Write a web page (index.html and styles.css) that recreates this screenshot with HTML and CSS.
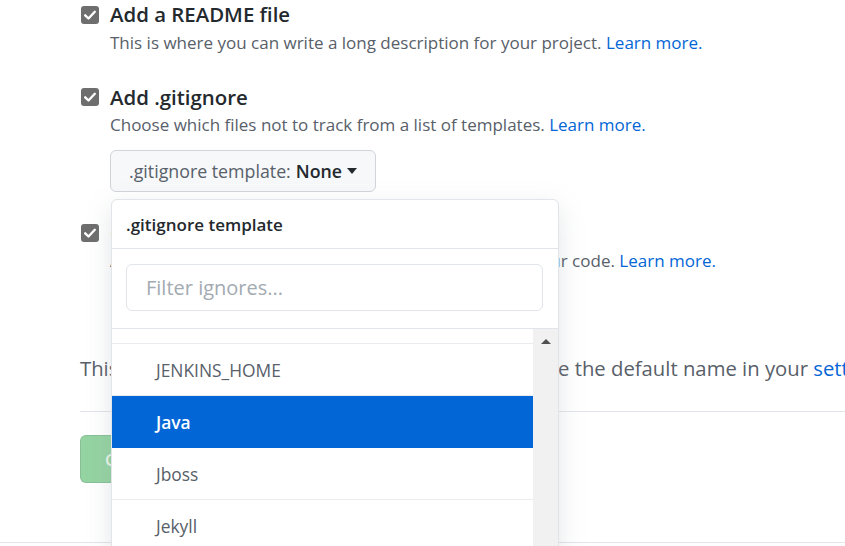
FILE: index.html
```html
<!DOCTYPE html>
<html>
<head>
<meta charset="utf-8">
<link rel="stylesheet" href="styles.css">
</head>
<body>
<div class="page">
  <div class="option first">
    <span class="check"><svg width="18" height="18" viewBox="0 0 18 18"><rect width="18" height="18" rx="3" fill="#6e6e6e"/><path d="M4.2 9.3 L7.5 12.5 L13.8 5.8" stroke="#fff" stroke-width="2.4" fill="none" stroke-linecap="round" stroke-linejoin="round"/></svg></span>
    <div class="body">
      <div class="title">Add a README file</div>
      <div class="desc">This is where you can write a long description for your project. <a>Learn more.</a></div>
    </div>
  </div>
  <div class="option second">
    <span class="check"><svg width="18" height="18" viewBox="0 0 18 18"><rect width="18" height="18" rx="3" fill="#6e6e6e"/><path d="M4.2 9.3 L7.5 12.5 L13.8 5.8" stroke="#fff" stroke-width="2.4" fill="none" stroke-linecap="round" stroke-linejoin="round"/></svg></span>
    <div class="body">
      <div class="title">Add .gitignore</div>
      <div class="desc">Choose which files not to track from a list of templates. <a>Learn more.</a></div>
      <button class="select-btn"><span class="muted">.gitignore template:</span> <b>None</b> <span class="caret"></span></button>
    </div>
  </div>
  <div class="option third">
    <span class="check"><svg width="18" height="18" viewBox="0 0 18 18"><rect width="18" height="18" rx="3" fill="#6e6e6e"/><path d="M4.2 9.3 L7.5 12.5 L13.8 5.8" stroke="#fff" stroke-width="2.4" fill="none" stroke-linecap="round" stroke-linejoin="round"/></svg></span>
    <div class="body">
      <div class="title">Choose a license</div>
      <div class="desc">A license tells others what they can and can't do with your code. <a>Learn more.</a></div>
    </div>
  </div>
  <p class="branch-note">This will set <span class="branch">main</span> as the default branch. Change the default name in your <a>settings</a>.</p>
  <hr class="rule">
  <button class="create">Create repository</button>
  <div class="footer-line"></div>
</div>

<div class="menu">
  <div class="menu-header">.gitignore template</div>
  <div class="menu-filter"><input class="filter-input" type="text" placeholder="Filter ignores..."></div>
  <div class="menu-list-wrap">
    <div class="menu-list">
      <div class="item partial"></div>
      <div class="item">JENKINS_HOME</div>
      <div class="item selected">Java</div>
      <div class="item">Jboss</div>
      <div class="item">Jekyll</div>
    </div>
    <div class="scrollbar"><span class="arrow-up"></span></div>
  </div>
</div>
</body>
</html>
```
FILE: styles.css
```css
html, body {
  margin: 0;
  padding: 0;
  background: #fff;
  overflow: hidden;
  height: 546px;
}
body {
  font-family: "Open Sans", "Noto Sans", sans-serif;
  color: #24292e;
}
.page {
  padding-left: 80px;
  position: relative;
}
.option {
  display: flex;
  align-items: flex-start;
  gap: 11px;
}
.check {
  display: block;
  margin-left: 1px;
  margin-top: 5px;
  height: 18px;
}
.option.first { padding-top: 0; }
.option.first .check { margin-top: 6px; }
.option.second { margin-top: 26px; }
.option.third { margin-top: 27px; }
.title {
  font-size: 20.4px;
  font-weight: 600;
  line-height: 28px;
}
.option.first .desc { margin-top: 1px; }
.desc {
  font-size: 17px;
  line-height: 28px;
  color: #586069;
}
a { color: #0366d6; }
.select-btn {
  margin-top: 11px;
  height: 42px;
  padding: 0 18px;
  font-family: inherit;
  font-size: 17.8px;
  background: #f6f8fa;
  border: 1px solid #d1d5da;
  border-radius: 6px;
  color: #24292e;
  display: flex;
  align-items: center;
  gap: 5px;
}
.select-btn b { font-weight: 600; }
.muted { color: #586069; }
.caret {
  width: 0; height: 0;
  border-left: 5.5px solid transparent;
  border-right: 5.5px solid transparent;
  border-top: 6px solid #24292e;
}
.branch-note {
  margin: 79px 0 0;
  height: 29px;
  font-size: 20.3px;
  line-height: 28px;
  color: #586069;
  white-space: nowrap;
}
.branch {
  color: #0366d6;
  background: #f1f8ff;
  font-family: "Liberation Mono", monospace;
  font-size: 19px;
  line-height: 20px;
  padding: 3px 8px;
  margin: 0 13px;
  border-radius: 6px;
}
.rule {
  margin: 28px 0 0;
  border: 0;
  border-top: 1px solid #e1e4e8;
}
.create {
  margin-top: 23px;
  height: 48px;
  padding: 0 24px;
  background: #94d3a2;
  border: 1px solid rgba(27,31,35,0.1);
  border-radius: 6px;
  color: rgba(255,255,255,0.8);
  font-family: inherit;
  font-size: 17px;
  font-weight: 600;
}
.footer-line {
  margin-top: 59px;
  margin-left: -80px;
  border-top: 1px solid #e1e4e8;
}

.menu {
  position: absolute;
  left: 111px;
  top: 199px;
  width: 446px;
  height: 420px;
  background: #fff;
  border: 1px solid #e1e4e8;
  border-radius: 6px;
  box-shadow: 0 8px 24px rgba(149,157,165,0.25);
  overflow: hidden;
}
.menu-header {
  height: 48px;
  padding-left: 14px;
  display: flex;
  align-items: center;
  font-size: 17px;
  font-weight: 600;
  border-bottom: 1px solid #e1e4e8;
}
.menu-filter {
  padding: 15px 15px 17px 14px;
  border-bottom: 1px solid #e1e4e8;
}
.filter-input {
  display: block;
  box-sizing: border-box;
  width: 100%;
  height: 47px;
  border: 1px solid #e1e4e8;
  border-radius: 6px;
  padding: 0 19px;
  font-family: inherit;
  font-size: 20px;
  outline: none;
}
.filter-input::placeholder { color: #a3aab1; }
.menu-list-wrap {
  display: flex;
}
.menu-list {
  flex: 1;
}
.item {
  height: 51px;
  padding-left: 44px;
  display: flex;
  align-items: center;
  font-size: 17.4px;
  color: #586069;
  border-bottom: 1px solid #eaecef;
}
.item.partial { height: 14px; }
.item.selected {
  background: #0366d6;
  color: #fff;
  font-weight: 600;
  border-bottom-color: #0366d6;
}
.scrollbar {
  width: 25px;
  background: #f1f1f1;
  display: flex;
  justify-content: center;
  padding-top: 10px;
}
.arrow-up {
  width: 0; height: 0;
  border-left: 5px solid transparent;
  border-right: 5px solid transparent;
  border-bottom: 5px solid #505050;
}
```
